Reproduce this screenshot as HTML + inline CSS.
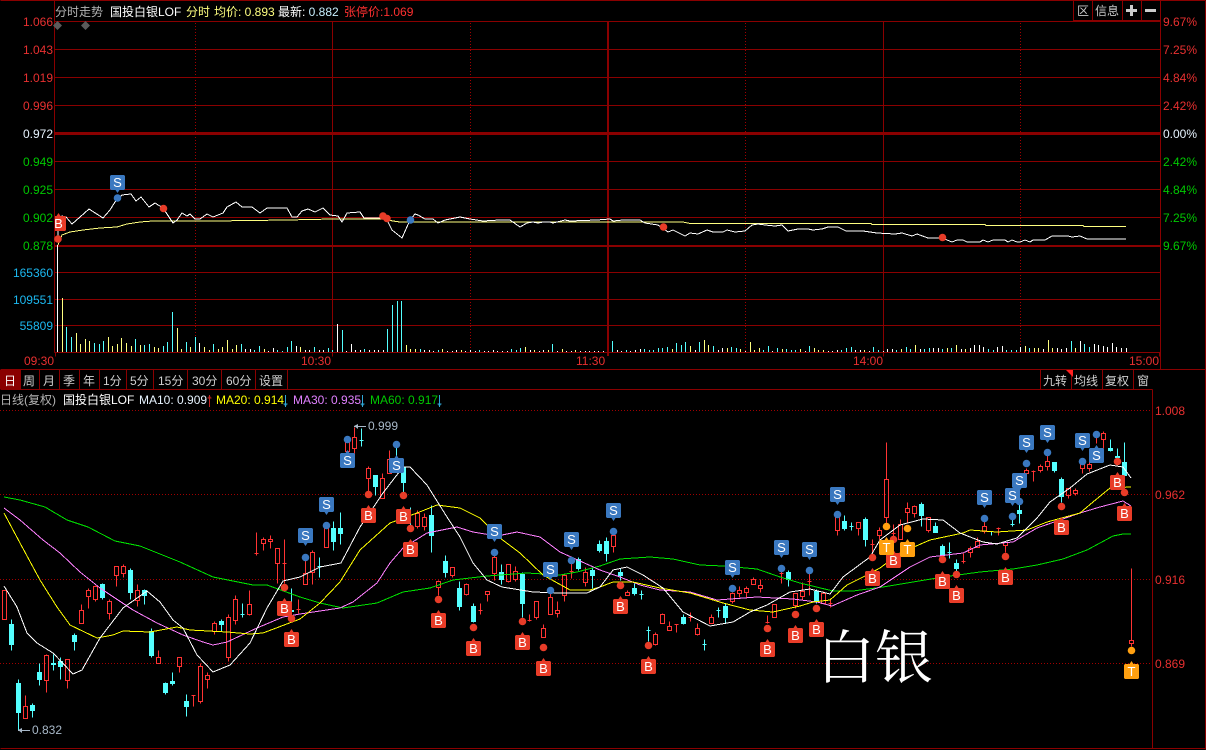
<!DOCTYPE html>
<html><head><meta charset="utf-8"><title>分时走势</title>
<style>
html,body{margin:0;padding:0;background:#000;width:1206px;height:750px;overflow:hidden}
svg{display:block;position:absolute;left:0;top:0}
text{font-family:"Liberation Sans","Noto Sans CJK SC",sans-serif;font-size:12px}
.g{stroke:#8a0000;fill:none;shape-rendering:crispEdges}
.o{stroke:#a00000;fill:none;stroke-width:1;stroke-dasharray:1 2}
.l{fill:none;shape-rendering:crispEdges;stroke-width:1}
.r{text-anchor:end}
.m text{font-size:13px;fill:#fff;text-anchor:middle}
.m circle,.c circle{r:3.8px}
</style></head><body>
<svg width="1206" height="750" viewBox="0 0 1206 750" xmlns="http://www.w3.org/2000/svg">
<defs>
<path id="u" d="M-6.5-7.5h13l1 1v13l-1 1h-13l-1-1v-13l1-1zM-2-7.5l2-3 2 3z"/>
<path id="d" d="M-6.5-7.5h13l1 1v13l-1 1h-13l-1-1v-13l1-1zM-2 7.5l2 3 2-3z"/>
</defs>
<rect width="1206" height="750" fill="#000"/>
<!-- frame and grid -->
<g class="g" transform="translate(.5,.5)">
<path d="M0 0H1205M54 0V352M1160 0V369M1205 0V749M0 369H1206M0 389H1152M1152 389V748M0 748H1205"/>
<path d="M54 21H1160M54 49H1160M54 77H1160M54 105H1160M54 161H1160M54 189H1160M54 217H1160M54 272H1160M54 299H1160M54 325H1160M54 352H1160"/>
<path d="M332 21V356M883 21V356M55 352V356M1159 352V356"/>
<path d="M20 369V389M39 369V389M59 369V389M79 369V389M99 369V389M126 369V389M153 369V389M187 369V389M221 369V389M255 369V389M287 369V389"/>
<path d="M1040 369V389M1071 369V389M1102 369V389M1133 369V389"/>
<path d="M1073 0V21M1092 0V21M1122 0V21M1141 0V21"/>
</g>
<path class="o" d="M195.500 23V352M470.500 23V352M745.500 23V352M1020.500 23V352"/>
<path class="o" d="M0 410.500H1152M0 494.500H1152M0 579.500H1152M0 663.500H1152"/>
<rect x="54" y="132" width="1106" height="3" fill="#8a0000"/>
<rect x="54" y="245" width="1106" height="2" fill="#8a0000"/>
<rect x="607" y="21" width="2" height="335" fill="#8a0000"/>
<rect x="1073" y="20" width="87" height="2" fill="#8a0000"/>
<rect x="0" y="370" width="20" height="19" fill="#8a0000"/>
<path d="M1066 370h7v7z" fill="#ff2020"/>
<!-- diamonds -->
<path d="M57.500 21l4.500 4.500-4.500 4.500-4.500-4.500zM85.500 21l4.500 4.500-4.500 4.500-4.500-4.500z" fill="#5a5a5a"/>
<!-- title bar -->
<text x="55" y="16" fill="#b4b4b4">分时走势</text>
<text x="110" y="16" fill="#fff">国投白银LOF</text>
<text x="186" y="16" fill="#ffff80">分时</text>
<text x="214" y="16" fill="#ffff80">均价: 0.893</text>
<text x="278" y="16" fill="#fff">最新: <tspan fill="#c8f0ff">0.882</tspan></text>
<text x="344" y="16" fill="#ff3030">张停价:1.069</text>
<text x="1077" y="15" fill="#c8c8c8">区</text>
<text x="1095" y="15" fill="#c8c8c8">信息</text>
<path d="M1130 5h3v4h4v3h-4v4h-3v-4h-4v-3h4zM1145 9h11v3h-11z" fill="#ccc"/>
<!-- left labels -->
<g class="r" fill="#e83030">
<text x="53" y="26">1.066</text><text x="53" y="54">1.043</text><text x="53" y="82">1.019</text><text x="53" y="110">0.996</text>
</g>
<text x="53" y="138" class="r" fill="#e8f4ff">0.972</text>
<g class="r" fill="#00c800">
<text x="53" y="166">0.949</text><text x="53" y="194">0.925</text><text x="53" y="222">0.902</text><text x="53" y="250">0.878</text>
</g>
<g class="r" fill="#1cb8f0">
<text x="53" y="277">165360</text><text x="53" y="304">109551</text><text x="53" y="330">55809</text>
</g>
<!-- right labels -->
<g fill="#e83030">
<text x="1163" y="26">9.67%</text><text x="1163" y="54">7.25%</text><text x="1163" y="82">4.84%</text><text x="1163" y="110">2.42%</text>
</g>
<text x="1163" y="138" fill="#e8f4ff">0.00%</text>
<g fill="#00c800">
<text x="1163" y="166">2.42%</text><text x="1163" y="194">4.84%</text><text x="1163" y="222">7.25%</text><text x="1163" y="250">9.67%</text>
</g>
<!-- time axis -->
<g fill="#e83030">
<text x="24" y="365">09:30</text><text x="301" y="365">10:30</text><text x="576" y="365">11:30</text><text x="853" y="365">14:00</text><text x="1129" y="365">15:00</text>
</g>
<!-- volume -->
<g class="l" transform="translate(.5,0)">
<path stroke="#fff" d="M57 352V245M199 352V343M245 352V349M250 352V349M268 352V351M273 352V348M296 352V346M305 352V350M309 352V350M319 352V350M323 352V350M337 352V324M346 352V351M351 352V344M355 352V350M360 352V350M369 352V350M374 352V350M378 352V350M383 352V350M424 352V350M429 352V350M433 352V351M447 352V351M452 352V351M456 352V350M465 352V351M470 352V350M475 352V351M484 352V351M488 352V351M493 352V350M497 352V351M502 352V351M507 352V351M530 352V350M539 352V351M543 352V350M557 352V351M566 352V351M571 352V351M580 352V351M585 352V351M589 352V351M594 352V351M598 352V351M603 352V351M617 352V350M621 352V351M630 352V351M635 352V350M640 352V349M695 352V350M718 352V350M722 352V348M745 352V351M772 352V351M805 352V351M828 352V351M832 352V351M837 352V350M855 352V350M860 352V350M869 352V351M883 352V351M887 352V349M892 352V349M920 352V349M933 352V348M938 352V348M961 352V349M970 352V348M974 352V345M979 352V345M983 352V347M997 352V347M1002 352V346M1020 352V347M1043 352V349M1057 352V348M1061 352V349M1066 352V348M1080 352V341M1094 352V344M1098 352V345M1103 352V346M1107 352V347M1112 352V343M1116 352V347M1121 352V348M1126 352V348"/>
<path stroke="#ffff80" d="M62 352V298M76 352V333M80 352V344M85 352V339M89 352V341M108 352V337M112 352V346M117 352V344M121 352V338M126 352V343M131 352V346M140 352V345M154 352V347M158 352V348M177 352V328M181 352V349M190 352V347M204 352V347M209 352V350M218 352V349M222 352V347M227 352V340M232 352V349M236 352V345M264 352V349M300 352V347M406 352V345M410 352V349M415 352V349M442 352V349M461 352V350M525 352V347M534 352V350M548 352V350M562 352V349M575 352V350M672 352V349M690 352V346M704 352V340M708 352V345M727 352V348M740 352V349M750 352V342M754 352V350M759 352V348M782 352V349M800 352V349M814 352V348M818 352V350M823 352V350M864 352V350M901 352V349M915 352V345M947 352V348M956 352V345M965 352V349M1025 352V346M1034 352V348M1038 352V348M1048 352V340M1052 352V348M1075 352V348"/>
<path stroke="#54ffff" d="M66 352V327M71 352V337M94 352V343M99 352V344M103 352V341M135 352V339M144 352V345M149 352V344M163 352V346M167 352V342M172 352V312M186 352V342M195 352V337M213 352V344M241 352V344M254 352V350M259 352V346M277 352V350M282 352V351M287 352V347M291 352V341M314 352V347M328 352V348M332 352V350M342 352V330M364 352V349M387 352V329M392 352V305M397 352V301M401 352V301M420 352V349M438 352V350M479 352V350M511 352V349M516 352V350M520 352V348M552 352V344M612 352V341M626 352V350M644 352V349M649 352V350M653 352V350M658 352V348M662 352V348M667 352V347M676 352V343M681 352V345M685 352V342M699 352V342M713 352V346M731 352V347M736 352V348M763 352V350M768 352V346M777 352V348M786 352V349M791 352V350M795 352V350M809 352V346M841 352V350M846 352V348M851 352V347M873 352V347M878 352V350M896 352V350M906 352V347M910 352V349M924 352V349M929 352V348M942 352V349M951 352V348M988 352V349M993 352V350M1006 352V350M1011 352V350M1016 352V350M1029 352V348M1071 352V341M1084 352V344M1089 352V347"/>
</g>
<!-- intraday lines -->
<g class="l">
<polyline stroke="#ffff80" points="58,245 62,235 70,232 83,230 100,228 117,227 127,224 140,222 153,221 213,221 287,220 333,219 383,219 393,221 400,222 683,222 690,223.5 871,223.5 872,224.5 985,224.5 986,225.5 1083,225.5 1084,226.5 1126,226.5"/>
<polyline stroke="#fff" points="58,238 58,230 62,216 66,217 72,224 80,217 89,209 103,218 110,210 115,202 122,195 131,194 136,201 141,197 149,207 155,203 163,208 173,223 177,220 182,213 187,216 190,214 195,219 200,219 207,214 213,217 223,213 227,207 236,202 242,207 252,207 260,213 267,208 277,208 287,208 292,217 297,217 302,211 308,209 315,212 323,208 330,215 338,216 342,222 347,213 360,212 364,218 383,218 388,222 392,230 402,238 410,220 415,214 418,215 425,219 433,219 438,223 445,220 460,217 470,219 483,221 500,220 510,220 520,227 527,223 533,222 538,223 543,222 550,222 553,223 565,220 570,221 597,220 610,219 613,221 623,220 640,220 645,223 658,225 668,232 673,230 685,236 690,233 698,234 707,230 713,232 723,232 727,230 735,232 745,231 752,225 758,224 765,225 775,226 782,225 788,231 798,229 808,229 813,230 822,229 828,227 838,227 846,231 863,231 877,233 895,234 902,233 912,236 917,234 928,238 942,238 952,242 957,240 963,240 967,242 980,242 983,240 988,242 993,240 1005,240 1008,242 1012,240 1017,242 1020,242 1025,240 1030,242 1033,240 1045,240 1052,236 1068,236 1072,237 1080,236 1087,239 1126,239"/>
</g>
<!-- intraday markers -->
<g class="c" fill="#e83c28"><circle cx="58" cy="239"/><circle cx="163.500" cy="208.500"/><circle cx="383" cy="216"/><circle cx="387" cy="218.500"/><circle cx="663.500" cy="227"/><circle cx="942.500" cy="237.500"/></g>
<g class="c" fill="#3a78c0"><circle cx="117.500" cy="198"/><circle cx="410.500" cy="220"/></g>
<svg x="55" y="200" width="20" height="40" overflow="hidden"><g class="m" fill="#e83c28"><use href="#u" x="3.500" y="23.500"/><text x="3.500" y="28">B</text></g></svg>
<g class="m" fill="#3a78c0"><use href="#d" x="117.500" y="182.500"/><text x="117.500" y="187">S</text></g>
<!-- toolbar -->
<g fill="#d0d0d0">
<text x="4" y="385" fill="#fff">日</text><text x="23" y="385">周</text><text x="43" y="385">月</text><text x="63" y="385">季</text><text x="83" y="385">年</text><text x="103" y="385">1分</text><text x="130" y="385">5分</text><text x="158" y="385">15分</text><text x="192" y="385">30分</text><text x="226" y="385">60分</text><text x="259" y="385">设置</text>
<text x="1043" y="385">九转</text><text x="1074" y="385">均线</text><text x="1105" y="385">复权</text><text x="1137" y="385">窗</text>
</g>
<!-- info line -->
<text x="0" y="404" fill="#b4b4b4">日线(复权)</text>
<text x="63" y="404" fill="#fff">国投白银LOF</text>
<text x="139" y="404" fill="#e8f4ff">MA10: 0.909</text>
<text x="216" y="404" fill="#ffff00">MA20: 0.914</text>
<text x="293" y="404" fill="#e080ff">MA30: 0.935</text>
<text x="370" y="404" fill="#00c800">MA60: 0.917</text>
<g fill="none" stroke-width="1" shape-rendering="crispEdges">
<path stroke="#c02020" d="M209.500 395V407M207.500 398H211.500M208.500 397H210.500"/>
<path stroke="#30a8d8" d="M285.500 395V407M283.500 404H287.500M284.500 405H286.500M362.500 395V407M360.500 404H364.500M361.500 405H363.500M439.500 395V407M437.500 404H441.500M438.500 405H440.500"/>
</g>
<!-- lower axis -->
<g fill="#e83030">
<text x="1155" y="415">1.008</text><text x="1155" y="499">0.962</text><text x="1155" y="584">0.916</text><text x="1155" y="668">0.869</text>
</g>
<!-- candles -->
<g class="l" transform="translate(.5,.5)">
<path fill="#54ffff" stroke="#54ffff" d="M9 624h4V644h-4zM11 619V650M16 683h4V712h-4zM18 679V730M30 705h4V710h-4zM32 703V717M37 672h4V679h-4zM39 663V685M51 663h4V664h-4zM53 654V670M58 661h4V666h-4zM60 657V679M72 635h4V641h-4zM74 633V650M100 584h4V597h-4zM102 583V599M128 570h4V592h-4zM130 568V599M142 590h4V595h-4zM144 589V604M149 631h4V655h-4zM151 628V657M163 683h4V692h-4zM165 682V694M170 681h4V683h-4zM172 672V685M184 701h4V706h-4zM186 694V716M219 621h4V624h-4zM221 619V631M240 614h4M242 603V617M289 610h4V611h-4zM291 588V611M317 566h4M319 557V577M331 528h4V541h-4zM333 521V550M338 528h4V533h-4zM340 512V544M359 440h4M361 428V446M373 475h4V486h-4zM375 475V495M396 445V468M401 467h4V482h-4zM403 467V495M410 507V525M429 515h4V535h-4zM431 505V552M443 561h4V572h-4zM445 555V577M457 588h4V606h-4zM459 581V610M471 606h4V621h-4zM473 603V622M499 572h4V579h-4zM501 564V584M520 574h4V603h-4zM522 572V617M576 559h4V568h-4zM578 557V570M590 570h4V575h-4zM592 567V588M597 544h4V550h-4zM599 540V552M604 541h4V553h-4zM606 537V561M618 572h4V575h-4zM620 568V580M632 588h4V593h-4zM634 583V595M639 594h4M641 590V599M646 630h4M648 626V641M681 617h4V623h-4zM683 614V624M702 644h4M704 639V650M716 610h4M718 607V617M723 606h4V617h-4zM725 603V623M786 572h4V579h-4zM788 570V586M814 591h4V601h-4zM816 589V603M842 521h4V528h-4zM844 515V530M849 526h4M851 522V530M863 519h4V539h-4zM865 517V546M919 504h4V515h-4zM921 502V526M933 526h4V532h-4zM935 522V532M940 546h4V555h-4zM942 544V558M947 552h4M949 542V558M954 563h4V568h-4zM956 559V575M989 531h4M991 531V535M1010 524h4M1012 517V526M1017 510h4V513h-4zM1019 501V523M1052 462h4V470h-4zM1054 470V472M1059 479h4V496h-4zM1061 477V502M1108 448h4V450h-4zM1110 439V451M1115 456h4V457h-4zM1117 448V457M1122 462h4V475h-4zM1124 442V476"/>
<path stroke="#ff3333" d="M2 590h4V619h-4zM23 706h4V718h-4zM25 695V706M44 655h4V680h-4zM46 654V655M46 680V692M65 659h4V680h-4zM67 680V688M79 610h4V623h-4zM81 604V610M86 590h4V596h-4zM88 588V590M88 596V608M93 586h4V599h-4zM95 585V586M95 599V601M107 601h4V613h-4zM109 599V601M109 613V619M114 566h4V575h-4zM116 575V586M121 566h4V573h-4zM123 564V566M123 573V577M135 590h4V600h-4zM137 584V590M137 600V606M156 657h4V663h-4zM158 650V657M177 657h4V666h-4zM179 666V672M191 695h4M193 695V706M198 666h4V701h-4zM200 663V666M200 701V703M205 675h4V679h-4zM207 672V675M207 679V688M212 623h4V631h-4zM214 621V623M214 631V634M226 617h4V657h-4zM228 614V617M228 657V661M233 599h4V620h-4zM235 595V599M235 620V624M247 604h4V614h-4zM249 590V604M249 614V615M254 553h4M256 532V555M261 539h4V543h-4zM263 537V539M263 543V550M268 539h4V541h-4zM270 535V539M270 541V548M275 548h4V563h-4zM277 563V583M282 563h4M284 539V583M296 609h4M298 599V613M303 573h4V584h-4zM305 557V573M310 552h4V572h-4zM312 550V552M312 572V584M324 528h4V547h-4zM326 527V528M345 442h4V451h-4zM347 439V442M352 437h4V448h-4zM354 427V437M354 448V453M366 468h4V478h-4zM368 466V468M368 478V492M380 478h4V498h-4zM382 473V478M387 459h4V473h-4zM389 450V459M415 513h4V526h-4zM417 510V513M417 526V528M422 517h4V526h-4zM424 513V517M424 526V530M436 581h4V587h-4zM438 580V581M438 587V595M450 567h4V575h-4zM452 575V577M464 584h4V594h-4zM466 583V584M466 594V595M478 610h4M480 603V614M485 591h4V594h-4zM487 594V601M492 557h4V573h-4zM494 553V557M494 573V580M506 564h4V581h-4zM508 581V582M513 571h4V579h-4zM515 566V571M515 579V581M527 620h4M529 614V621M534 601h4V617h-4zM536 617V619M541 628h4V637h-4zM543 624V628M548 597h4V614h-4zM550 590V597M555 610h4V613h-4zM557 601V610M557 613V617M562 575h4V595h-4zM564 573V575M564 595V601M569 571h4M571 563V578M583 572h4V582h-4zM585 567V572M585 582V586M611 535h4V546h-4zM613 531V535M613 546V552M625 592h4V595h-4zM627 590V592M653 634h4V644h-4zM655 632V634M655 644V645M660 614h4V623h-4zM662 613V614M667 626h4V630h-4zM669 621V626M674 624h4M676 624V632M688 617h4M690 612V621M695 628h4V634h-4zM697 623V628M697 634V635M709 617h4V623h-4zM711 614V617M730 593h4V601h-4zM732 592V593M732 601V603M737 590h4V593h-4zM739 586V590M739 593V597M744 588h4V592h-4zM746 586V588M746 592V597M751 579h4V584h-4zM753 577V579M758 585h4V588h-4zM760 579V585M760 588V592M765 622h4M767 615V623M772 604h4V617h-4zM779 573h4M781 570V583M793 593h4V605h-4zM795 605V608M800 591h4V596h-4zM802 582V591M802 596V600M807 581h4M809 573V595M821 593h4V603h-4zM823 591V593M828 603h4M830 598V607M835 517h4V530h-4zM837 530V535M856 522h4V528h-4zM858 528V535M870 544h4M872 539V554M877 530h4V535h-4zM879 527V530M879 535V539M884 479h4V517h-4zM886 442V479M886 517V527M891 533h4M893 524V537M898 524h4V539h-4zM900 519V524M905 508h4V512h-4zM907 502V508M907 512V523M912 506h4V513h-4zM914 505V506M914 513V517M926 517h4V530h-4zM928 530V532M961 561h4M963 553V563M968 548h4V552h-4zM970 546V548M970 552V557M975 541h4V547h-4zM977 537V541M982 526h4V531h-4zM984 520V526M984 531V533M996 528h4M998 527V535M1003 542h4V545h-4zM1005 545V552M1024 470h4V473h-4zM1026 468V470M1031 471h4M1033 470V481M1038 466h4V470h-4zM1040 464V466M1040 470V472M1045 461h4V466h-4zM1047 455V461M1047 466V470M1066 488h4V495h-4zM1068 495V498M1073 490h4V493h-4zM1075 488V490M1075 493V495M1080 463h4V468h-4zM1082 468V473M1087 464h4V468h-4zM1089 457V464M1089 468V471M1096 434V443M1101 433h4V439h-4zM1103 431V433M1103 439V448M1129 640h4V643h-4zM1131 568V640M1131 643V646"/>
</g>
<!-- moving averages -->
<g class="l">
<polyline stroke="#00e000" points="4,497 20,500 45,507 67,520 88,527 115,541 140,546 180,562 213,577 253,585 267,585 300,597 320,603 343,608 377,603 403,592 430,588 453,580 487,576 527,573 560,575 577,572 600,566 620,559 650,557 673,559 700,565 723,566 757,569 780,577 800,583 833,591 853,591 883,587 913,582 943,577 980,572 1013,569 1037,565 1063,559 1087,550 1113,536 1123,534 1131,534"/>
<polyline stroke="#ff80ff" points="4,508 20,520 43,540 60,553 80,572 100,588 133,610 157,623 183,635 203,642 213,645 227,642 257,628 283,617 300,614 340,608 353,602 377,583 390,563 403,548 427,533 457,527 473,532 497,536 517,532 540,537 560,552 600,570 620,577 640,585 660,590 690,592 717,600 757,597 793,599 817,602 832,606 857,595 880,587 910,567 930,557 963,553 980,545 1013,542 1037,528 1060,520 1080,513 1100,507 1123,501 1131,506"/>
<polyline stroke="#ffff00" points="4,513 20,543 40,580 57,607 70,625 97,638 113,635 123,631 150,632 177,627 190,630 227,632 250,634 263,633 300,619 320,603 340,582 360,550 390,523 417,513 437,505 460,508 480,518 500,538 520,553 543,575 570,590 590,590 600,587 613,582 633,582 660,588 690,593 723,603 750,610 773,612 800,606 813,602 830,600 847,585 867,575 880,568 900,553 930,540 963,533 970,530 997,532 1027,530 1047,522 1080,513 1093,502 1110,488 1131,487"/>
<polyline stroke="#fff" points="4,586 17,607 27,633 37,643 53,653 73,674 82,670 100,638 123,608 147,591 160,602 173,620 183,628 197,655 213,672 230,665 250,643 267,608 283,581 300,577 320,567 341,563 360,527 383,493 403,467 410,467 427,485 447,517 460,537 473,563 487,580 502,587 533,592 560,593 587,593 600,587 613,570 627,567 643,575 663,588 683,612 710,626 733,622 750,612 767,605 790,592 810,589 830,594 843,577 870,557 880,540 900,525 923,519 943,520 960,533 983,542 997,544 1017,538 1037,518 1050,502 1070,488 1087,474 1110,465 1123,467 1131,478"/>
</g>
<!-- extremes -->
<g fill="#a8b8c8" stroke="none">
<path d="M18 730h12v1H18zM18 730l4-2v5zM354 426h12v1h-12zM354 426l4-2v5z"/>
<text x="32" y="734" style="font-size:12px">0.832</text>
<text x="368" y="430" style="font-size:12px">0.999</text>
</g>
<!-- watermark -->
<text x="817" y="678" fill="#fff" style="font-family:'Noto Serif CJK SC','Liberation Serif',serif;font-size:58px">白银</text>
<!-- dots -->
<g class="c" fill="#e83c28">
<circle cx="284.500" cy="587.500"/><circle cx="291.500" cy="618.500"/><circle cx="368.500" cy="494.500"/><circle cx="403.500" cy="495.500"/><circle cx="410.500" cy="528.500"/><circle cx="438.500" cy="599.500"/><circle cx="473.500" cy="627.500"/><circle cx="522.500" cy="621.500"/><circle cx="543.500" cy="647.500"/><circle cx="620.500" cy="585.500"/><circle cx="648.500" cy="645.500"/><circle cx="767.500" cy="628.500"/><circle cx="795.500" cy="614.500"/><circle cx="816.500" cy="608.500"/><circle cx="872.500" cy="557.500"/><circle cx="893.500" cy="539.500"/><circle cx="942.500" cy="559.500"/><circle cx="956.500" cy="574.500"/><circle cx="1005.500" cy="556.500"/><circle cx="1061.500" cy="506.500"/><circle cx="1117.500" cy="461.500"/><circle cx="1124.500" cy="492.500"/>
</g>
<g class="c" fill="#3a78c0">
<circle cx="305.500" cy="557.500"/><circle cx="326.500" cy="525.500"/><circle cx="347.500" cy="439.500"/><circle cx="396.500" cy="444.500"/><circle cx="494.500" cy="552.500"/><circle cx="550.500" cy="590.500"/><circle cx="571.500" cy="560.500"/><circle cx="613.500" cy="531.500"/><circle cx="732.500" cy="588.500"/><circle cx="781.500" cy="568.500"/><circle cx="809.500" cy="570.500"/><circle cx="837.500" cy="514.500"/><circle cx="984.500" cy="518.500"/><circle cx="1012.500" cy="516.500"/><circle cx="1019.500" cy="501.500"/><circle cx="1026.500" cy="463.500"/><circle cx="1047.500" cy="452.500"/><circle cx="1082.500" cy="461.500"/><circle cx="1096.500" cy="434.500"/>
</g>
<g class="c" fill="#ffa010">
<circle cx="886.500" cy="526.500"/><circle cx="907.500" cy="528.500"/><circle cx="1131.500" cy="650.500"/>
</g>
<!-- B markers -->
<g class="m" fill="#e83c28">
<use href="#u" x="284.500" y="608.500"/><text x="284.500" y="613">B</text>
<use href="#u" x="291.500" y="639.500"/><text x="291.500" y="644">B</text>
<use href="#u" x="368.500" y="515.500"/><text x="368.500" y="520">B</text>
<use href="#u" x="403.500" y="516.500"/><text x="403.500" y="521">B</text>
<use href="#u" x="410.500" y="549.500"/><text x="410.500" y="554">B</text>
<use href="#u" x="438.500" y="620.500"/><text x="438.500" y="625">B</text>
<use href="#u" x="473.500" y="648.500"/><text x="473.500" y="653">B</text>
<use href="#u" x="522.500" y="642.500"/><text x="522.500" y="647">B</text>
<use href="#u" x="543.500" y="668.500"/><text x="543.500" y="673">B</text>
<use href="#u" x="620.500" y="606.500"/><text x="620.500" y="611">B</text>
<use href="#u" x="648.500" y="666.500"/><text x="648.500" y="671">B</text>
<use href="#u" x="767.500" y="649.500"/><text x="767.500" y="654">B</text>
<use href="#u" x="795.500" y="635.500"/><text x="795.500" y="640">B</text>
<use href="#u" x="816.500" y="629.500"/><text x="816.500" y="634">B</text>
<use href="#u" x="872.500" y="578.500"/><text x="872.500" y="583">B</text>
<use href="#u" x="893.500" y="560.500"/><text x="893.500" y="565">B</text>
<use href="#u" x="942.500" y="581.500"/><text x="942.500" y="586">B</text>
<use href="#u" x="956.500" y="595.500"/><text x="956.500" y="600">B</text>
<use href="#u" x="1005.500" y="577.500"/><text x="1005.500" y="582">B</text>
<use href="#u" x="1061.500" y="527.500"/><text x="1061.500" y="532">B</text>
<use href="#u" x="1117.500" y="482.500"/><text x="1117.500" y="487">B</text>
<use href="#u" x="1124.500" y="513.500"/><text x="1124.500" y="518">B</text>
</g>
<!-- S markers -->
<g class="m" fill="#3a78c0">
<use href="#d" x="305.500" y="535.500"/><text x="305.500" y="540">S</text>
<use href="#d" x="326.500" y="504.500"/><text x="326.500" y="509">S</text>
<use href="#u" x="347.500" y="460.500"/><text x="347.500" y="465">S</text>
<use href="#u" x="396.500" y="465.500"/><text x="396.500" y="470">S</text>
<use href="#d" x="494.500" y="531.500"/><text x="494.500" y="536">S</text>
<use href="#d" x="550.500" y="569.500"/><text x="550.500" y="574">S</text>
<use href="#d" x="571.500" y="539.500"/><text x="571.500" y="544">S</text>
<use href="#d" x="613.500" y="510.500"/><text x="613.500" y="515">S</text>
<use href="#d" x="732.500" y="567.500"/><text x="732.500" y="572">S</text>
<use href="#d" x="781.500" y="547.500"/><text x="781.500" y="552">S</text>
<use href="#d" x="809.500" y="549.500"/><text x="809.500" y="554">S</text>
<use href="#d" x="837.500" y="494.500"/><text x="837.500" y="499">S</text>
<use href="#d" x="984.500" y="497.500"/><text x="984.500" y="502">S</text>
<use href="#d" x="1012.500" y="495.500"/><text x="1012.500" y="500">S</text>
<use href="#d" x="1019.500" y="480.500"/><text x="1019.500" y="485">S</text>
<use href="#d" x="1026.500" y="442.500"/><text x="1026.500" y="447">S</text>
<use href="#d" x="1047.500" y="432.500"/><text x="1047.500" y="437">S</text>
<use href="#d" x="1082.500" y="440.500"/><text x="1082.500" y="445">S</text>
<use href="#u" x="1096.500" y="455.500"/><text x="1096.500" y="460">S</text>
</g>
<!-- T markers -->
<g class="m" fill="#ffa010">
<use href="#u" x="886.500" y="547.500"/><text x="886.500" y="552">T</text>
<use href="#u" x="907.500" y="549.500"/><text x="907.500" y="554">T</text>
<use href="#u" x="1131.500" y="671.500"/><text x="1131.500" y="676">T</text>
</g>
</svg>
</body></html>
